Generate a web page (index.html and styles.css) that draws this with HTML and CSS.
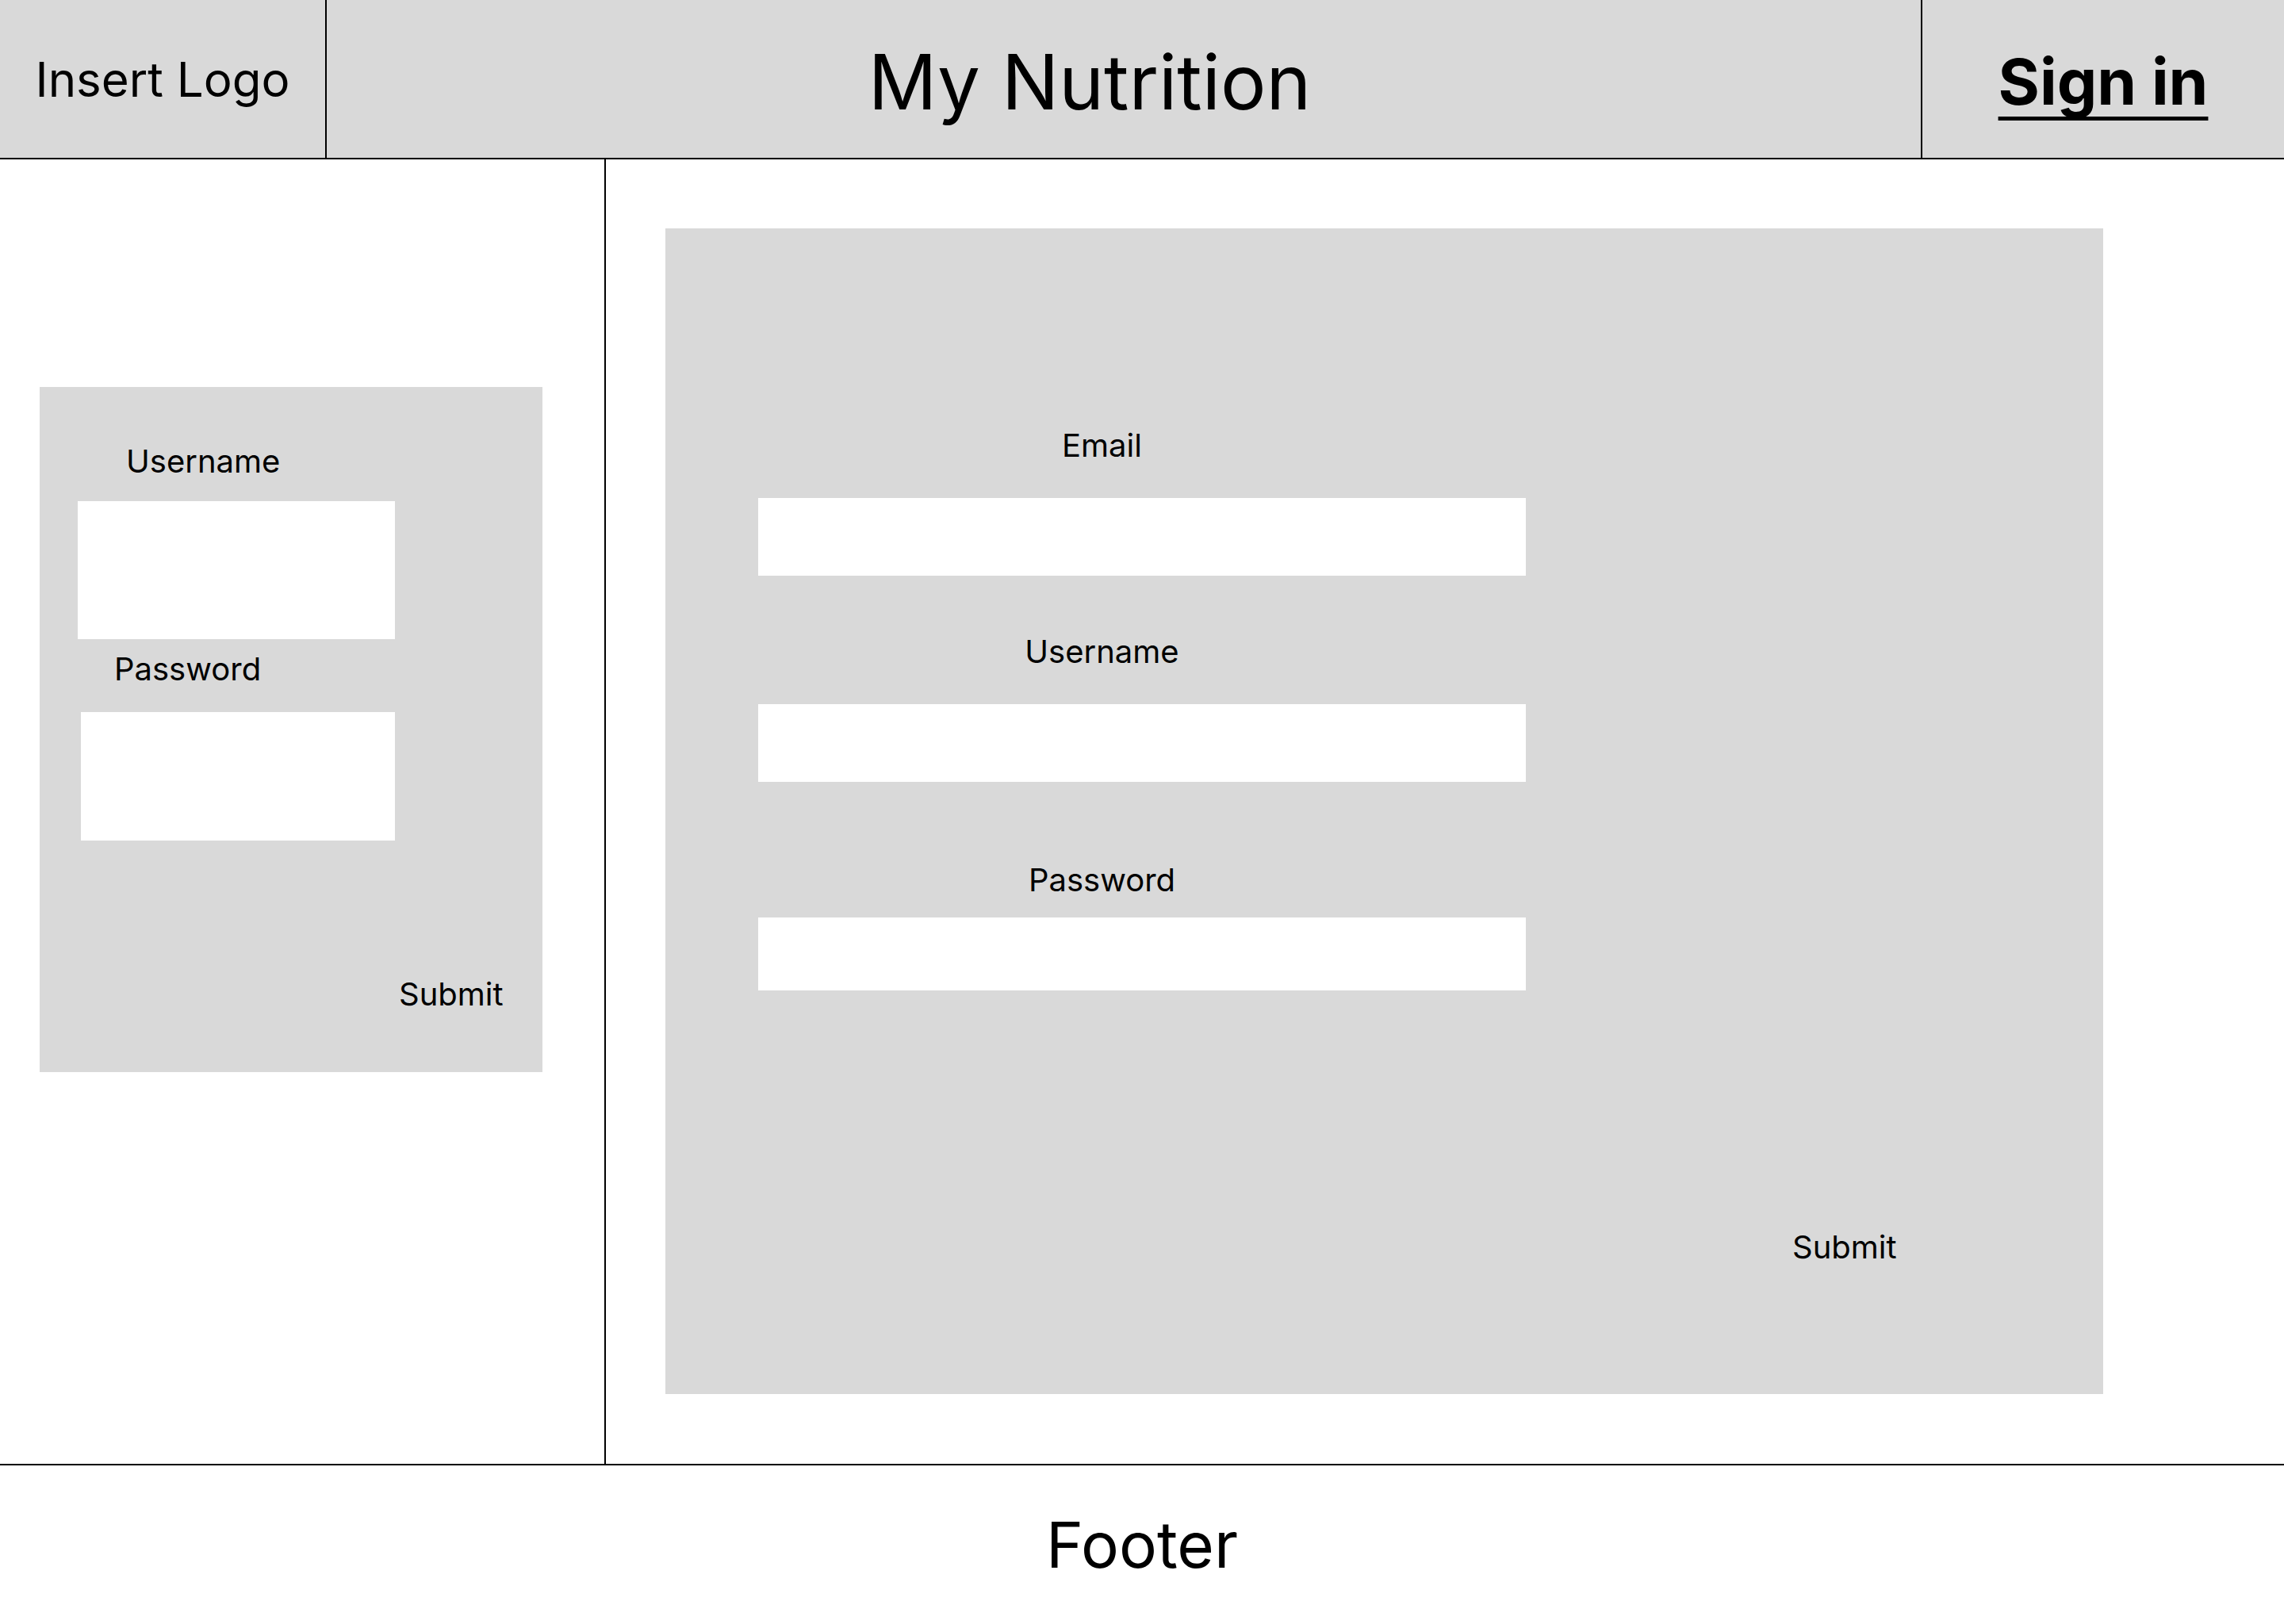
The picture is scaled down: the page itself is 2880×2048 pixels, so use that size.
FILE: index.html
```html
<!DOCTYPE html>
<html lang="en">
<head>
    <meta charset="UTF-8">
    <meta name="viewport" content="width=device-width, initial-scale=1.0">
    <title>My Nutrition</title>
    <link rel="stylesheet" href="styles.css">
</head>
<body>
    <header class="top-bar">
        <div class="logo-cell">Insert Logo</div>
        <div class="title-cell"><h1>My Nutrition</h1></div>
        <div class="signin-cell"><a href="#" class="signin-link">Sign in</a></div>
    </header>

    <main class="content">
        <aside class="sidebar">
            <form class="login-card">
                <label class="login-label user-label" for="loginUser">Username</label>
                <input class="login-input user-input" type="text" id="loginUser">
                <label class="login-label pass-label" for="loginPass">Password</label>
                <input class="login-input pass-input" type="password" id="loginPass">
                <button type="button" class="login-submit">Submit</button>
            </form>
        </aside>

        <section class="main-area">
            <form class="register-card">
                <label class="reg-label email-label" for="regEmail">Email</label>
                <input class="reg-input email-input" type="email" id="regEmail">
                <label class="reg-label user-label" for="regUser">Username</label>
                <input class="reg-input user-input" type="text" id="regUser">
                <label class="reg-label pass-label" for="regPass">Password</label>
                <input class="reg-input pass-input" type="password" id="regPass">
                <button type="button" class="reg-submit">Submit</button>
            </form>
        </section>
    </main>

    <footer class="footer">Footer</footer>
</body>
</html>
```

FILE: styles.css
```css
* {
    box-sizing: border-box;
}
body {
    margin: 0;
    height: 100vh;
    display: flex;
    flex-direction: column;
    font-family: Inter, "Noto Sans", sans-serif;
    color: #000;
    background-color: #fff;
}

/* header */
.top-bar {
    display: flex;
    height: 201px;
    background-color: #d9d9d9;
    border-bottom: 2px solid #000;
}
.logo-cell {
    width: 412px;
    border-right: 2px solid #000;
    display: flex;
    align-items: center;
    justify-content: center;
    font-size: 60px;
}
.title-cell {
    flex: 1;
    display: flex;
    align-items: center;
    justify-content: center;
    padding: 6px 86px 0 0;
}
.title-cell h1 {
    margin: 0;
    font-size: 96px;
    font-weight: 400;
}
.signin-cell {
    width: 458px;
    border-left: 2px solid #000;
    display: flex;
    align-items: center;
    justify-content: center;
    padding-top: 6px;
}
.signin-link {
    color: #000;
    font-size: 80px;
    font-weight: 700;
    text-decoration: underline;
    text-decoration-thickness: 5px;
    text-underline-offset: 15px;
    text-decoration-skip-ink: none;
}

/* body */
.content {
    flex: 1;
    display: flex;
}
.sidebar {
    width: 764px;
    border-right: 2px solid #000;
    padding: 287px 0 0 50px;
}
.main-area {
    flex: 1;
    padding: 87px 0 0 75px;
}

input, button {
    font-family: inherit;
    border: none;
    outline: none;
}

/* login card */
.login-card {
    width: 634px;
    height: 864px;
    background-color: #d9d9d9;
    display: flex;
    flex-direction: column;
    align-items: flex-start;
}
.login-label {
    font-size: 40px;
    line-height: 48px;
}
.login-label.user-label {
    margin: 70px 0 0 109px;
}
.login-label.pass-label {
    margin: 14px 0 0 94px;
}
.login-input {
    background-color: #fff;
}
.login-input.user-input {
    width: 400px;
    height: 174px;
    margin: 26px 0 0 48px;
}
.login-input.pass-input {
    width: 396px;
    height: 162px;
    margin: 30px 0 0 52px;
}
.login-submit {
    margin: 170px 0 0 453px;
    padding: 0;
    background: none;
    font-size: 40px;
    line-height: 48px;
    color: #000;
}

/* register card */
.register-card {
    width: 1813px;
    height: 1470px;
    background-color: #d9d9d9;
    display: flex;
    flex-direction: column;
    align-items: flex-start;
    padding-left: 117px;
}
.reg-label {
    width: 867px;
    text-align: center;
    font-size: 40px;
    line-height: 48px;
}
.reg-label.email-label {
    margin-top: 250px;
}
.reg-label.user-label {
    margin-top: 72px;
}
.reg-label.pass-label {
    margin-top: 100px;
}
.reg-input {
    width: 968px;
    height: 98px;
    background-color: #fff;
}
.reg-input.email-input {
    margin-top: 42px;
}
.reg-input.user-input {
    margin-top: 42px;
}
.reg-input.pass-input {
    height: 92px;
    margin-top: 23px;
}
.reg-submit {
    margin: 300px 0 0 1304px;
    padding: 0;
    background: none;
    font-size: 40px;
    line-height: 48px;
    color: #000;
}

/* footer */
.footer {
    height: 202px;
    border-top: 2px solid #000;
    display: flex;
    align-items: center;
    justify-content: center;
    padding-bottom: 2px;
    font-size: 80px;
}
```
